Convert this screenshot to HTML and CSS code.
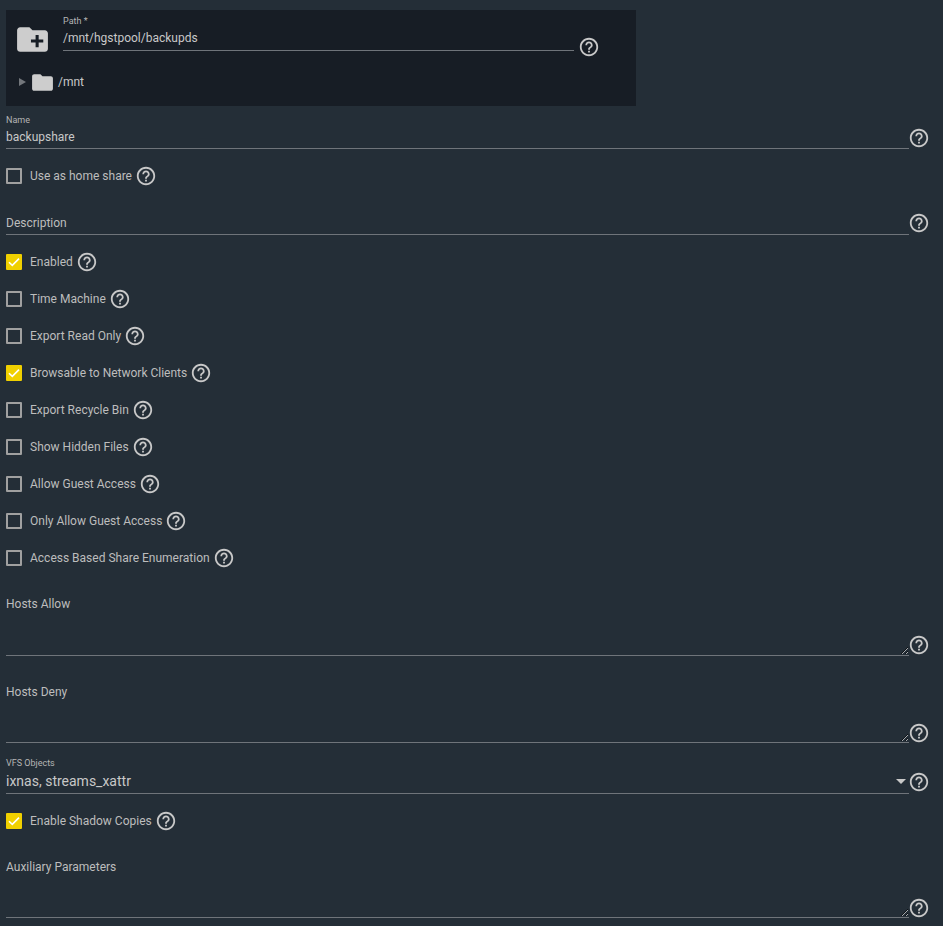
FILE: index.html
```html
<!DOCTYPE html>
<html lang="en">
<head>
<meta charset="utf-8">
<title>SMB Share</title>
<link rel="stylesheet" href="styles.css">
</head>
<body>
<svg class="defs" width="0" height="0" aria-hidden="true">
  <symbol id="help" viewBox="0 0 24 24"><path d="M11 18h2v-2h-2v2zm1-16C6.48 2 2 6.48 2 12s4.48 10 10 10 10-4.48 10-10S17.52 2 12 2zm0 18c-4.41 0-8-3.59-8-8s3.59-8 8-8 8 3.59 8 8-3.59 8-8 8zm0-14c-2.21 0-4 1.79-4 4h2c0-1.1.9-2 2-2s2 .9 2 2c0 2-3 1.75-3 5h2c0-2.25 3-2.5 3-5 0-2.21-1.79-4-4-4z"/></symbol>
  <symbol id="check" viewBox="0 0 16 16"><path d="M3 8.2l3.3 3.2L13 4.6" fill="none" stroke="#fff" stroke-width="1.6"/></symbol>
</svg>
<form class="form">
  <section class="explorer">
    <div class="explorer-top">
      <svg class="folder-add" viewBox="0 0 24 24"><path d="M20 6h-8l-2-2H4c-1.11 0-1.99.89-1.99 2L2 18c0 1.11.89 2 2 2h16c1.11 0 2-.89 2-2V8c0-1.11-.89-2-2-2zm-1 8h-3v3h-2v-3h-3v-2h3V9h2v3h3v2z"/></svg>
      <div class="path-field">
        <div class="small-label">Path *</div>
        <div class="path-value">/mnt/hgstpool/backupds</div>
      </div>
      <svg class="help help-path"><use href="#help"/></svg>
    </div>
    <div class="tree-row">
      <span class="tree-arrow"></span>
      <svg class="tree-folder" viewBox="0 0 24 24"><path d="M10 4H4c-1.1 0-1.99.9-1.99 2L2 18c0 1.1.9 2 2 2h16c1.1 0 2-.9 2-2V8c0-1.1-.9-2-2-2h-8l-2-2z"/></svg>
      <span class="tree-text">/mnt</span>
    </div>
  </section>

  <div class="field field-name">
    <div class="control">
      <div class="small-label">Name</div>
      <div class="value">backupshare</div>
    </div>
    <svg class="help"><use href="#help"/></svg>
  </div>

  <label class="check-row check-home"><span class="box"></span><span>Use as home share</span><svg class="help"><use href="#help"/></svg></label>

  <div class="field field-desc">
    <div class="control"><div class="placeholder">Description</div></div>
    <svg class="help"><use href="#help"/></svg>
  </div>

  <div class="checks">
    <label class="check-row"><span class="box on"><svg><use href="#check"/></svg></span><span>Enabled</span><svg class="help"><use href="#help"/></svg></label>
    <label class="check-row"><span class="box"></span><span>Time Machine</span><svg class="help"><use href="#help"/></svg></label>
    <label class="check-row"><span class="box"></span><span>Export Read Only</span><svg class="help"><use href="#help"/></svg></label>
    <label class="check-row"><span class="box on"><svg><use href="#check"/></svg></span><span>Browsable to Network Clients</span><svg class="help"><use href="#help"/></svg></label>
    <label class="check-row"><span class="box"></span><span>Export Recycle Bin</span><svg class="help"><use href="#help"/></svg></label>
    <label class="check-row"><span class="box"></span><span>Show Hidden Files</span><svg class="help"><use href="#help"/></svg></label>
    <label class="check-row"><span class="box"></span><span>Allow Guest Access</span><svg class="help"><use href="#help"/></svg></label>
    <label class="check-row"><span class="box"></span><span>Only Allow Guest Access</span><svg class="help"><use href="#help"/></svg></label>
    <label class="check-row"><span class="box"></span><span>Access Based Share Enumeration</span><svg class="help"><use href="#help"/></svg></label>
  </div>

  <div class="field area-field area-allow">
    <div class="control">
      <div class="placeholder">Hosts Allow</div>
      <textarea class="area" aria-label="Hosts Allow"></textarea>
    </div>
    <svg class="help"><use href="#help"/></svg>
  </div>

  <div class="field area-field area-deny">
    <div class="control">
      <div class="placeholder">Hosts Deny</div>
      <textarea class="area" aria-label="Hosts Deny"></textarea>
    </div>
    <svg class="help"><use href="#help"/></svg>
  </div>

  <div class="field field-vfs">
    <div class="control">
      <div class="small-label">VFS Objects</div>
      <div class="select-value"><span>ixnas, streams_xattr</span><span class="caret"></span></div>
    </div>
    <svg class="help"><use href="#help"/></svg>
  </div>

  <label class="check-row check-shadow"><span class="box on"><svg><use href="#check"/></svg></span><span>Enable Shadow Copies</span><svg class="help"><use href="#help"/></svg></label>

  <div class="field area-field area-aux">
    <div class="control">
      <div class="placeholder">Auxiliary Parameters</div>
      <textarea class="area" aria-label="Auxiliary Parameters"></textarea>
    </div>
    <svg class="help"><use href="#help"/></svg>
  </div>
</form>
</body>
</html>
```

FILE: styles.css
```css
* { box-sizing: border-box; }
html, body { height: 100%; }
body {
  margin: 0;
  overflow: hidden;
  background: #242e37;
  color: #bdbdbd;
  font-family: Roboto, "Liberation Sans", sans-serif;
  font-size: 12px;
}
.defs { position: absolute; }
.form { padding: 10px 0 0 6px; width: 943px; }

.help { width: 22px; height: 22px; fill: #c8c8c8; flex: none; display: block; margin-left: -1px; }

.explorer { width: 630px; height: 96px; background: #171d25; padding-left: 8px; }
.explorer-top { display: flex; height: 41px; }
.folder-add { width: 37px; height: 37px; margin-top: 11px; fill: #cdcdcd; flex: none; }
.path-field { width: 511px; height: 41px; margin-left: 12px; border-bottom: 1px solid #6f747a; }
.small-label { font-size: 9px; line-height: 12px; color: #b5b5b5; }
.path-field .small-label { margin-top: 5px; }
.path-value { font-size: 12px; line-height: 16px; margin-top: 3px; color: #c8c8c8; }
.help-path { margin: 26px 0 0 4px; }

.tree-row { display: flex; align-items: center; height: 24px; margin-top: 19px; }
.tree-arrow {
  width: 0; height: 0; margin-left: 5px;
  border-left: 7px solid #73777c;
  border-top: 4px solid transparent;
  border-bottom: 4px solid transparent;
}
.tree-folder { width: 25px; height: 25px; margin-left: 4px; fill: #cdcdcd; flex: none; }
.tree-text { font-size: 12px; margin-left: 3px; color: #c8c8c8; }

.field { display: flex; }
.control { width: 903px; border-bottom: 1px solid #6f747a; flex: none; position: relative; }
.field-name { height: 36px; margin-top: 7px; }
.field-name .small-label { margin-top: 1px; }
.field-name .help { margin-top: 14px; }
.value { font-size: 12px; line-height: 16px; margin-top: 3px; color: #c8c8c8; }
.field-desc { height: 36px; margin-top: 5px; }
.field-desc .control { padding-top: 16px; }
.field-desc .help { margin-top: 13px; }
.placeholder { font-size: 12px; line-height: 16px; color: #bdbdbd; }

.check-row { display: flex; align-items: center; height: 36px; }
.check-home { margin-top: 9px; }
.checks { display: flex; flex-direction: column; gap: 1px; margin-top: 9px; }
.box {
  width: 16px; height: 16px; flex: none; margin-right: 8px;
  border: 2px solid #a0a0a0; border-radius: 1px; position: relative;
}
.box.on { background: #f0d000; border-color: #f0d000; }
.box svg { position: absolute; left: -2px; top: -2px; width: 16px; height: 16px; }
.check-row .help { margin-left: 3px; }

.area-field .control { display: flex; flex-direction: column; }
.area-field .placeholder { margin-top: 2px; }
.area-field .help { margin-top: 40px; }
.area {
  display: block; flex: 1; width: 100%; min-height: 0; margin: 0; padding: 0;
  background: transparent; border: 0; outline: 0; color: #c8c8c8; resize: both;
  color-scheme: dark;
}
.area-allow { height: 62px; margin-top: 18px; }
.area-deny { height: 61px; margin-top: 26px; }
.area-aux { height: 61px; margin-top: 18px; }

.field-vfs { height: 37px; margin-top: 14px; }
.field-vfs .help { margin-top: 14px; }
.select-value { display: flex; justify-content: space-between; align-items: center; font-size: 14px; line-height: 18px; margin-top: 3px; color: #c8c8c8; }
.caret {
  width: 0; height: 0; margin-right: 3px;
  border-top: 5px solid #c8c8c8;
  border-left: 5px solid transparent;
  border-right: 5px solid transparent;
}
.check-shadow { margin-top: 9px; }
```
